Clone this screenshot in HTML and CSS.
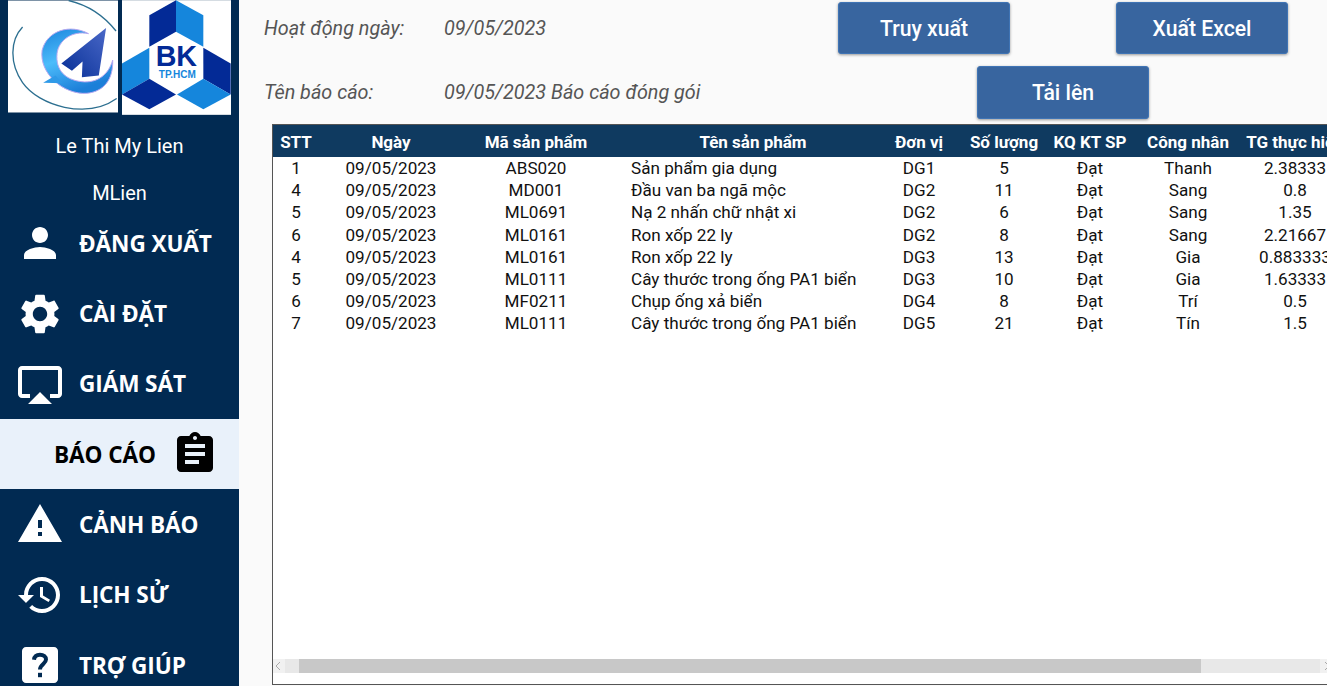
FILE: index.html
```html
<!DOCTYPE html>
<html lang="vi">
<head>
    <meta charset="UTF-8">
    <meta name="viewport" content="width=device-width, initial-scale=1.0">
    <title>Báo cáo</title>
    <link rel="stylesheet" href="styles.css">
</head>
<body>
    <aside class="sidebar">
        <div class="logos">
            <svg class="logo logo-left" viewBox="22 0 332 338">
                <defs>
                    <linearGradient id="moon" x1="0" y1="0" x2="0.4" y2="1">
                        <stop offset="0" stop-color="#1b84dc"/>
                        <stop offset="0.5" stop-color="#4cbcfb"/>
                        <stop offset="1" stop-color="#1c7fd8"/>
                    </linearGradient>
                    <linearGradient id="plane" x1="0" y1="1" x2="1" y2="0">
                        <stop offset="0" stop-color="#062f96"/>
                        <stop offset="1" stop-color="#4a68c8"/>
                    </linearGradient>
                </defs>
                <rect x="22" y="0" width="332" height="338" fill="#fff"/>
                <path class="eye" d="M205 0C265 14 315 50 348 92"/>
                <path class="eye" d="M66 80C28 120 26 190 66 248C115 318 260 360 350 296"/>
                <path class="moon" d="M265 100C210 70 140 90 125 150C115 220 190 285 260 280C310 275 340 240 338 180C325 225 290 250 245 245C195 240 165 210 170 160C175 120 215 90 265 100Z" fill="url(#moon)"/>
                <path d="M128 248L165 226L188 250Z" fill="#2f9ae8"/>
                <path d="M318 83L183 190L215 212L247 184L245 232L296 226Z" fill="url(#plane)"/>
            </svg>
            <svg class="logo logo-right" viewBox="368 0 327 344">
                <rect x="368" y="0" width="327" height="344" fill="#fff"/>
                <path class="bk-dark" d="M450 45L530 0V95L450 140Z"/>
                <path class="bk-light" d="M530 0L612 45V140L530 95Z"/>
                <path class="bk-light" d="M368 190L450 143V236L368 283Z"/>
                <path class="bk-dark" d="M612 143L694 190V283L612 236Z"/>
                <path class="bk-dark" d="M368 283L450 236L530 283L450 327Z"/>
                <path class="bk-light" d="M533 283L612 236L694 283L612 327Z"/>
                <text class="bk-text" x="531" y="198" text-anchor="middle">BK</text>
                <text class="bk-sub" x="534" y="233" text-anchor="middle">TP.HCM</text>
            </svg>
        </div>
        <div class="user-name">Le Thi My Lien</div>
        <div class="user-id">MLien</div>
        <nav class="nav">
            <a class="nav-item">
                <svg class="icon" viewBox="0 0 24 24"><path d="M12 12c2.21 0 4-1.79 4-4s-1.79-4-4-4-4 1.79-4 4 1.79 4 4 4zm0 2c-2.67 0-8 1.34-8 4v2h16v-2c0-2.66-5.33-4-8-4z"/></svg>
                <span>ĐĂNG XUẤT</span>
            </a>
            <a class="nav-item">
                <svg class="icon" viewBox="0 0 24 24"><path d="M19.14 12.94c.04-.3.06-.61.06-.94 0-.32-.02-.64-.07-.94l2.03-1.58c.18-.14.23-.41.12-.61l-1.92-3.32c-.12-.22-.37-.29-.59-.22l-2.39.96c-.5-.38-1.03-.7-1.62-.94l-.36-2.54c-.04-.24-.24-.41-.48-.41h-3.84c-.24 0-.43.17-.47.41l-.36 2.54c-.59.24-1.13.57-1.62.94l-2.39-.96c-.22-.08-.47 0-.59.22L2.74 8.87c-.12.21-.08.47.12.61l2.03 1.58c-.05.3-.09.63-.09.94s.02.64.07.94l-2.03 1.58c-.18.14-.23.41-.12.61l1.92 3.32c.12.22.37.29.59.22l2.39-.96c.5.38 1.03.7 1.62.94l.36 2.54c.05.24.24.41.48.41h3.84c.24 0 .44-.17.47-.41l.36-2.54c.59-.24 1.13-.56 1.62-.94l2.39.96c.22.08.47 0 .59-.22l1.92-3.32c.12-.22.07-.47-.12-.61l-2.01-1.58zM12 15.6c-1.98 0-3.6-1.62-3.6-3.6s1.62-3.6 3.6-3.6 3.6 1.62 3.6 3.6-1.62 3.6-3.6 3.6z"/></svg>
                <span>CÀI ĐẶT</span>
            </a>
            <a class="nav-item">
                <svg class="icon" viewBox="0 0 24 24"><path d="M6 22h12l-6-6zM21 3H3c-1.1 0-2 .9-2 2v12c0 1.1.9 2 2 2h4v-2H3V5h18v12h-4v2h4c1.1 0 2-.9 2-2V5c0-1.1-.9-2-2-2z"/></svg>
                <span>GIÁM SÁT</span>
            </a>
            <a class="nav-item active">
                <span>BÁO CÁO</span>
                <svg class="icon" viewBox="0 0 24 24"><path d="M19 3h-4.18C14.4 1.84 13.3 1 12 1c-1.3 0-2.4.84-2.82 2H5c-1.1 0-2 .9-2 2v14c0 1.1.9 2 2 2h14c1.1 0 2-.9 2-2V5c0-1.1-.9-2-2-2zm-7 0c.55 0 1 .45 1 1s-.45 1-1 1-1-.45-1-1 .45-1 1-1zm2 14H7v-2h7v2zm3-4H7v-2h10v2zm0-4H7V7h10v2z"/></svg>
            </a>
            <a class="nav-item">
                <svg class="icon" viewBox="0 0 24 24"><path d="M1 21h22L12 2 1 21zm12-3h-2v-2h2v2zm0-4h-2v-4h2v4z"/></svg>
                <span>CẢNH BÁO</span>
            </a>
            <a class="nav-item">
                <svg class="icon" viewBox="0 0 24 24"><path d="M13 3c-4.97 0-9 4.03-9 9H1l3.89 3.89.07.14L9 12H6c0-3.87 3.13-7 7-7s7 3.13 7 7-3.13 7-7 7c-1.93 0-3.68-.79-4.94-2.06l-1.42 1.42C8.27 19.99 10.51 21 13 21c4.97 0 9-4.03 9-9s-4.03-9-9-9zm-1 5v5l4.28 2.54.72-1.21-3.5-2.08V8H12z"/></svg>
                <span>LỊCH SỬ</span>
            </a>
            <a class="nav-item">
                <svg class="icon" viewBox="0 0 24 24">
                    <path d="M19 3H5c-1.1 0-2 .9-2 2v14c0 1.1.9 2 2 2h14c1.1 0 2-.9 2-2V5c0-1.1-.9-2-2-2z"/>
                    <path class="help-mark" d="M9 9.4C9.2 7.7 10.4 6.9 12 6.9C13.8 6.9 15 7.9 15 9.3C15 11.4 12 11.6 12 14.3"/>
                    <rect class="help-dot" x="11" y="15.9" width="2" height="2.2"/>
                </svg>
                <span>TRỢ GIÚP</span>
            </a>
        </nav>
    </aside>
    <main class="main">
        <div class="top-row">
            <div class="info info-first">
                <span class="info-label">Hoạt động ngày:</span>
                <span>09/05/2023</span>
            </div>
            <button class="btn">Truy xuất</button>
            <button class="btn btn-excel">Xuất Excel</button>
        </div>
        <div class="top-row second">
            <div class="info info-second">
                <span class="info-label">Tên báo cáo:</span>
                <span>09/05/2023 Báo cáo đóng gói</span>
            </div>
            <button class="btn">Tải lên</button>
        </div>
        <div class="table-box">
            <table class="report">
                <colgroup>
                    <col class="c-stt"><col class="c-date"><col class="c-code"><col class="c-name"><col class="c-unit"><col class="c-qty"><col class="c-check"><col class="c-worker"><col class="c-time">
                </colgroup>
                <thead>
                    <tr>
                        <th class="stt">STT</th><th>Ngày</th><th>Mã sản phẩm</th><th>Tên sản phẩm</th><th>Đơn vị</th><th>Số lượng</th><th>KQ KT SP</th><th>Công nhân</th><th>TG thực hiện</th>
                    </tr>
                </thead>
                <tbody>
                    <tr><td class="stt">1</td><td>09/05/2023</td><td>ABS020</td><td class="name">Sản phẩm gia dụng</td><td>DG1</td><td>5</td><td>Đạt</td><td>Thanh</td><td>2.38333</td></tr>
                    <tr><td class="stt">4</td><td>09/05/2023</td><td>MD001</td><td class="name">Đầu van ba ngã mộc</td><td>DG2</td><td>11</td><td>Đạt</td><td>Sang</td><td>0.8</td></tr>
                    <tr><td class="stt">5</td><td>09/05/2023</td><td>ML0691</td><td class="name">Nạ 2 nhấn chữ nhật xi</td><td>DG2</td><td>6</td><td>Đạt</td><td>Sang</td><td>1.35</td></tr>
                    <tr><td class="stt">6</td><td>09/05/2023</td><td>ML0161</td><td class="name">Ron xốp 22 ly</td><td>DG2</td><td>8</td><td>Đạt</td><td>Sang</td><td>2.21667</td></tr>
                    <tr><td class="stt">4</td><td>09/05/2023</td><td>ML0161</td><td class="name">Ron xốp 22 ly</td><td>DG3</td><td>13</td><td>Đạt</td><td>Gia</td><td>0.883333</td></tr>
                    <tr><td class="stt">5</td><td>09/05/2023</td><td>ML0111</td><td class="name">Cây thước trong ống PA1 biển</td><td>DG3</td><td>10</td><td>Đạt</td><td>Gia</td><td>1.63333</td></tr>
                    <tr><td class="stt">6</td><td>09/05/2023</td><td>MF0211</td><td class="name">Chụp ống xả biển</td><td>DG4</td><td>8</td><td>Đạt</td><td>Trí</td><td>0.5</td></tr>
                    <tr><td class="stt">7</td><td>09/05/2023</td><td>ML0111</td><td class="name">Cây thước trong ống PA1 biển</td><td>DG5</td><td>21</td><td>Đạt</td><td>Tín</td><td>1.5</td></tr>
                </tbody>
            </table>
            <div class="scrollbar">
                <svg class="arrow" viewBox="0 0 6 10"><path d="M5 1L1 5l4 4"/></svg>
                <div class="track">
                    <div class="thumb"></div>
                </div>
                <svg class="arrow" viewBox="0 0 6 10"><path d="M1 1l4 4-4 4"/></svg>
            </div>
        </div>
    </main>
</body>
</html>
```

FILE: styles.css
```css
html, body {
    margin: 0;
    height: 686px;
    overflow: hidden;
}
body {
    display: flex;
    font-family: Roboto, sans-serif;
    background-color: #fafafa;
}

/* sidebar */
.sidebar {
    flex: 0 0 239px;
    background-color: #012a52;
    color: white;
}
.logos {
    display: flex;
    gap: 4px;
    padding-left: 8px;
    height: 134px;
}
.logo {
    display: block;
}
.logo-left {
    width: 110px;
    height: 113px;
}
.logo-right {
    width: 109px;
    height: 115px;
}
.eye {
    fill: none;
    stroke: #2c6f90;
    stroke-width: 4;
}
.moon {
    stroke: #b7a8f0;
    stroke-width: 3;
}
.bk-dark {
    fill: #032a96;
}
.bk-light {
    fill: #1586dc;
}
.bk-text {
    font-family: "Liberation Sans", sans-serif;
    font-weight: bold;
    font-size: 86px;
    fill: #032a96;
}
.bk-sub {
    font-family: "Liberation Sans", sans-serif;
    font-weight: bold;
    font-size: 30px;
    fill: #1586dc;
}
.user-name, .user-id {
    text-align: center;
    font-size: 20px;
    line-height: 24px;
}
.user-name {
    height: 47px;
}
.user-id {
    height: 27px;
}
.nav-item {
    display: flex;
    align-items: center;
    gap: 15px;
    height: 70.4px;
    padding-left: 16px;
    box-sizing: border-box;
    font-family: "Open Sans", sans-serif;
    font-weight: 700;
    font-size: 22.6px;
    letter-spacing: -0.1px;
}
.icon {
    flex: none;
    width: 48px;
    height: 48px;
    fill: white;
}
.help-mark {
    fill: none;
    stroke: #012a52;
    stroke-width: 2;
}
.icon .help-dot {
    fill: #012a52;
}
.nav-item.active {
    height: 70px;
    background-color: #e9f1fa;
    color: black;
    padding-left: 54px;
}
.nav-item.active .icon {
    fill: black;
}

/* top area */
.main {
    flex: 1;
    min-width: 0;
    padding-left: 25px;
    color: #555;
}
.top-row {
    display: flex;
    align-items: center;
    height: 52px;
    padding-top: 2px;
}
.top-row.second {
    height: 53px;
    padding-top: 12px;
}
.info {
    display: flex;
    font-style: italic;
    font-size: 19.8px;
}
.info-first {
    width: 574px;
}
.info-second {
    width: 713px;
}
.info-label {
    width: 180px;
}
.btn {
    width: 172px;
    height: 100%;
    border: 1px solid #3f74b5;
    border-radius: 3px;
    background-color: #38659f;
    color: white;
    font-family: Roboto, sans-serif;
    font-weight: 500;
    font-size: 21.2px;
    box-shadow: 0 1px 3px rgba(0, 0, 0, 0.4);
}
.btn-excel {
    margin-left: 106px;
}

/* table */
.table-box {
    display: flex;
    flex-direction: column;
    justify-content: space-between;
    box-sizing: border-box;
    width: 1100px;
    height: 561px;
    margin-top: 5px;
    margin-left: 8px;
    border: 1px solid #555;
    background-color: white;
}
.report {
    width: 1074px;
    table-layout: fixed;
    border-collapse: collapse;
    font-size: 17.1px;
    color: #111;
}
.c-stt { width: 66px; }
.c-date { width: 104px; }
.c-code { width: 186px; }
.c-name { width: 248px; }
.c-unit { width: 84px; }
.c-qty { width: 86px; }
.c-check { width: 86px; }
.c-worker { width: 110px; }
.c-time { width: 104px; }
.report th {
    height: 30px;
    padding: 2px 0 0;
    background-color: #0f3a60;
    color: white;
    font-weight: 700;
    font-size: 17px;
    white-space: nowrap;
}
.report td {
    height: 22.2px;
    padding: 0;
    text-align: center;
    white-space: nowrap;
}
.report .stt {
    padding-right: 20px;
}
.report .name {
    padding-left: 2px;
    text-align: left;
}
.scrollbar {
    display: flex;
    align-items: center;
    width: 1060px;
    height: 14px;
    margin-bottom: 11px;
    background-color: #f1f1f1;
}
.arrow {
    flex: none;
    width: 6px;
    height: 10px;
    margin: 0 4px 0 2px;
    fill: none;
    stroke: #aaa;
    stroke-width: 1;
}
.track {
    flex: none;
    box-sizing: border-box;
    width: 1035px;
    height: 100%;
    margin-right: 2px;
    padding-left: 14px;
    background-color: #e8e8e8;
}
.thumb {
    width: 902px;
    height: 100%;
    background-color: #c8c8c8;
}
```
